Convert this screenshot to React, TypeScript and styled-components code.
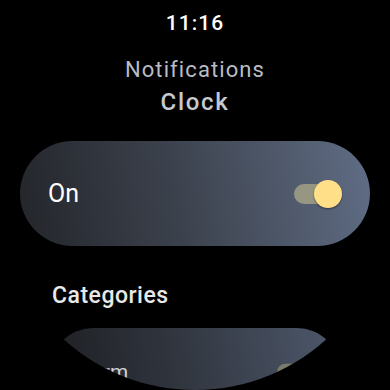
import React from "react";
import styled, { createGlobalStyle } from "styled-components";

const Global = createGlobalStyle`
  html, body { margin: 0; padding: 0; background: #000; }
  body { font-family: Roboto, "Noto Sans", sans-serif; }
`;

const Screen = styled.div`
  width: 390px;
  height: 390px;
  background: #000;
  border-radius: 50%;
  overflow: hidden;
  display: flex;
  flex-direction: column;
  align-items: center;
  box-sizing: border-box;
  padding-top: 11px;
`;

const Time = styled.div`
  font-size: 21px;
  line-height: 24px;
  font-weight: 500;
  color: #ffffff;
  letter-spacing: 1px;
`;

const Title = styled.div`
  margin-top: 21px;
  display: flex;
  flex-direction: column;
  align-items: center;
`;

const Subtitle = styled.div`
  font-size: 22px;
  line-height: 28px;
  color: #b9bdc2;
  letter-spacing: 1.1px;
`;

const Heading = styled.div`
  margin-top: 4px;
  font-size: 24px;
  line-height: 28px;
  font-weight: 500;
  color: #c6c9cd;
  letter-spacing: 1.7px;
`;

const Card = styled.div<{ $scale?: number; $dim?: number }>`
  width: 350px;
  height: 105px;
  flex: none;
  border-radius: 53px;
  background: linear-gradient(80deg, #23252a 0%, #3c424d 45%, #606d85 100%);
  display: flex;
  align-items: center;
  justify-content: space-between;
  box-sizing: border-box;
  padding: 0 28px 0 28px;
  transform: scale(${(p) => p.$scale ?? 1});
  transform-origin: top center;
  opacity: ${(p) => p.$dim ?? 1};
`;

const MainCard = styled(Card)`
  margin-top: 25px;
`;

const LowerCard = styled(Card)`
  margin-top: 18px;
`;

const CardLabel = styled.span`
  font-size: 25px;
  color: #ffffff;
`;

const Switch = styled.div`
  position: relative;
  width: 48px;
  height: 28px;
  flex: none;
`;

const Track = styled.div`
  position: absolute;
  left: 0;
  top: 4px;
  width: 44px;
  height: 20px;
  border-radius: 10px;
  background: #979682;
`;

const Thumb = styled.div`
  position: absolute;
  right: 0;
  top: 0;
  width: 28px;
  height: 28px;
  border-radius: 50%;
  background: #ffdf88;
  box-shadow: 0 1px 2px rgba(0, 0, 0, 0.45);
`;

const SectionHeader = styled.div`
  align-self: flex-start;
  margin-left: 52px;
  margin-top: 36px;
  font-size: 23px;
  line-height: 28px;
  font-weight: 500;
  color: #e8e8e8;
  letter-spacing: 0.5px;
`;

const ToggleSwitch = () => (
  <Switch>
    <Track />
    <Thumb />
  </Switch>
);

export default function App() {
  return (
    <>
      <Global />
      <Screen>
        <Time>11:16</Time>
        <Title>
          <Subtitle>Notifications</Subtitle>
          <Heading>Clock</Heading>
        </Title>
        <MainCard>
          <CardLabel>On</CardLabel>
          <ToggleSwitch />
        </MainCard>
        <SectionHeader>Categories</SectionHeader>
        <LowerCard $scale={0.83} $dim={0.82}>
          <CardLabel>Alarm</CardLabel>
          <ToggleSwitch />
        </LowerCard>
      </Screen>
    </>
  );
}
